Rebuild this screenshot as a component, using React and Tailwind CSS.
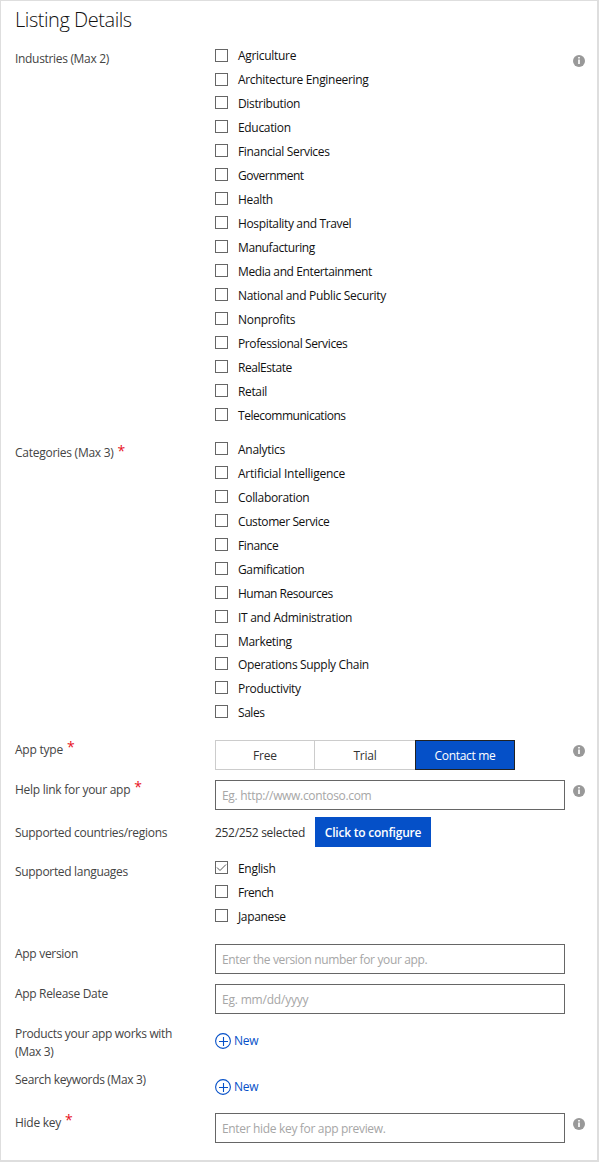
import React from "react";

const industries = [
  ["Agriculture", "tracking-[-0.3px]"],
  ["Architecture Engineering", "tracking-[-0.31px]"],
  ["Distribution", "tracking-[-0.35px]"],
  ["Education", "tracking-[-0.33px]"],
  ["Financial Services", "tracking-[-0.34px]"],
  ["Government", "tracking-[-0.48px]"],
  ["Health", "tracking-[-0.35px]"],
  ["Hospitality and Travel", "tracking-[-0.35px]"],
  ["Manufacturing", "tracking-[-0.4px]"],
  ["Media and Entertainment", "tracking-[-0.39px]"],
  ["National and Public Security", "tracking-[-0.3px]"],
  ["Nonprofits", "tracking-[-0.3px]"],
  ["Professional Services", "tracking-[-0.38px]"],
  ["RealEstate", "tracking-[-0.44px]"],
  ["Retail", "tracking-[-0.35px]"],
  ["Telecommunications", "tracking-[-0.47px]"],
];

const categories = [
  ["Analytics", "tracking-[-0.27px]"],
  ["Artificial Intelligence", "tracking-[-0.23px]"],
  ["Collaboration", "tracking-[-0.32px]"],
  ["Customer Service", "tracking-[-0.4px]"],
  ["Finance", "tracking-[-0.4px]"],
  ["Gamification", "tracking-[-0.38px]"],
  ["Human Resources", "tracking-[-0.48px]"],
  ["IT and Administration", "tracking-[-0.3px]"],
  ["Marketing", "tracking-[-0.32px]"],
  ["Operations Supply Chain", "tracking-[-0.33px]"],
  ["Productivity", "tracking-[-0.3px]"],
  ["Sales", "tracking-[-0.45px]"],
];

function Check({ text, track, checked, height = "h-6", box = "mt-1" }) {
  return (
    <label className={`flex items-start ${height}`}>
      <span className={`h-[13px] w-[13px] shrink-0 border border-[#666] ${box}`}>
        {checked && (
          <svg viewBox="0 0 11 11" className="block h-[11px] w-[11px]" fill="none" stroke="#555" strokeWidth="1">
            <path d="M1 5.5 L4 8.5 L10 2.5" />
          </svg>
        )}
      </span>
      <span className={`ml-[10px] whitespace-nowrap leading-6 text-[#111] ${track}`}>{text}</span>
    </label>
  );
}

function Row({ label, track = "tracking-[-0.3px]", required, star = "-mt-[3px]", info, pad, height, infoPad = "pt-[5px]", children }) {
  return (
    <div className={`flex items-start ${height}`}>
      <div className={`flex w-[200px] shrink-0 items-start leading-[18px] text-[#444] ${pad}`}>
        <span className={`whitespace-pre ${track}`}>{label}</span>
        {required && <span className={`ml-1 text-[14px] leading-[18px] text-[#e81123] ${star}`}>*</span>}
      </div>
      <div className="w-[350px] shrink-0">{children}</div>
      {info && (
        <div className={`ml-2 ${infoPad}`}>
          <svg viewBox="0 0 12 12" className="block h-3 w-3">
            <circle cx="6" cy="6" r="6" fill="#999" />
            <path d="M5 2h2v1.5H5zM5 4.5h2V9H5z" fill="#eee" />
          </svg>
        </div>
      )}
    </div>
  );
}

function Field({ placeholder, track }) {
  return (
    <input
      placeholder={placeholder}
      className={`block h-[30px] w-[350px] border border-[#666] bg-white px-1.5 text-xs outline-none placeholder:text-[#a6a6a6] ${track}`}
    />
  );
}

function NewLink() {
  return (
    <button className="flex h-4 items-center text-[#0550c8]">
      <svg viewBox="0 0 16 16" className="h-4 w-4" fill="none" stroke="currentColor" strokeWidth="1.1">
        <circle cx="8" cy="8" r="7.4" />
        <path d="M8.5 4v9M4 8.5h9" />
      </svg>
      <span className="ml-[3px] tracking-[-0.2px]">New</span>
    </button>
  );
}

export default function App() {
  return (
    <main className="h-[1162px] w-[599px] overflow-hidden border-t border-r-2 border-b-2 border-l border-[#dedede] bg-white pl-[14px] font-['Open_Sans',sans-serif] text-xs">
      <h1 className="h-[43px] pt-[5px] text-[20px] leading-[27px] font-[350] tracking-[-0.45px] text-[#111]">Listing Details</h1>

      <Row label="Industries (Max 2)" track="tracking-[-0.32px]" pad="pt-1.5" height="h-[394px]" info infoPad="pt-[11px]">
        {industries.map(([text, track], i) => (
          <Check key={text} text={text} track={track} box={i < 2 ? "mt-[5px]" : "mt-1"} />
        ))}
      </Row>

      <Row label="Categories (Max 3)" track="tracking-[-0.26px]" required star="-mt-[2px]" pad="pt-1.5" height="h-[302px]">
        {categories.map(([text, track], i) => (
          <Check key={text} text={text} track={track} height={i === 8 ? "h-[23px]" : "h-6"} />
        ))}
      </Row>

      <Row label="App type" track="tracking-[-0.22px]" required pad="pt-[1px]" height="h-10" info>
        <div className="flex h-[30px] w-[300px] text-[#333]">
          <button className="w-[100px] border border-[#ccc] pt-0.5 tracking-[-0.2px]">Free</button>
          <button className="w-[100px] border-y border-[#ccc] pt-0.5 tracking-[-0.2px]">Trial</button>
          <button className="w-[100px] border border-[#222] bg-[#0550c8] pt-0.5 tracking-[-0.3px] text-white">Contact me</button>
        </div>
      </Row>

      <Row label="Help link for your app" track="tracking-[-0.27px]" required pad="pt-[1px]" height="h-[37px]" info>
        <Field placeholder="Eg. http://www.contoso.com" track="tracking-[-0.32px]" />
      </Row>

      <Row label="Supported countries/regions" track="tracking-[-0.31px]" pad="pt-[7px]" height="h-10">
        <div className="flex h-[30px] items-center text-[#333]">
          <span className="w-[100px] pt-px tracking-[-0.31px]">252/252 selected</span>
          <button className="h-[30px] w-[116px] bg-[#0550c8] pt-px font-semibold tracking-[-0.22px] whitespace-nowrap text-white">Click to configure</button>
        </div>
      </Row>

      <Row label="Supported languages" track="tracking-[-0.31px]" pad="pt-1.5" height="h-[87px]">
        <Check text="English" track="tracking-[-0.3px]" checked />
        <Check text="French" track="tracking-[-0.5px]" />
        <Check text="Japanese" track="tracking-[-0.35px]" />
      </Row>

      <Row label="App version" pad="pt-[1px]" height="h-10">
        <Field placeholder="Enter the version number for your app." track="tracking-[-0.36px]" />
      </Row>

      <Row label="App Release Date" track="tracking-[-0.32px]" pad="pt-[1px]" height="h-[49px]">
        <Field placeholder="Eg. mm/dd/yyyy" track="tracking-[-0.2px]" />
      </Row>

      <Row label={"Products your app works with\n(Max 3)"} track="tracking-[-0.34px]" pad="-mt-[8px]" height="h-[46px]">
        <NewLink />
      </Row>

      <Row label="Search keywords (Max 3)" track="tracking-[-0.34px]" pad="-mt-[8px]" height="h-[34px]">
        <NewLink />
      </Row>

      <Row label="Hide key" track="tracking-[-0.28px]" required pad="pt-[1px]" height="h-[47px]" info>
        <Field placeholder="Enter hide key for app preview." track="tracking-[-0.33px]" />
      </Row>
    </main>
  );
}
